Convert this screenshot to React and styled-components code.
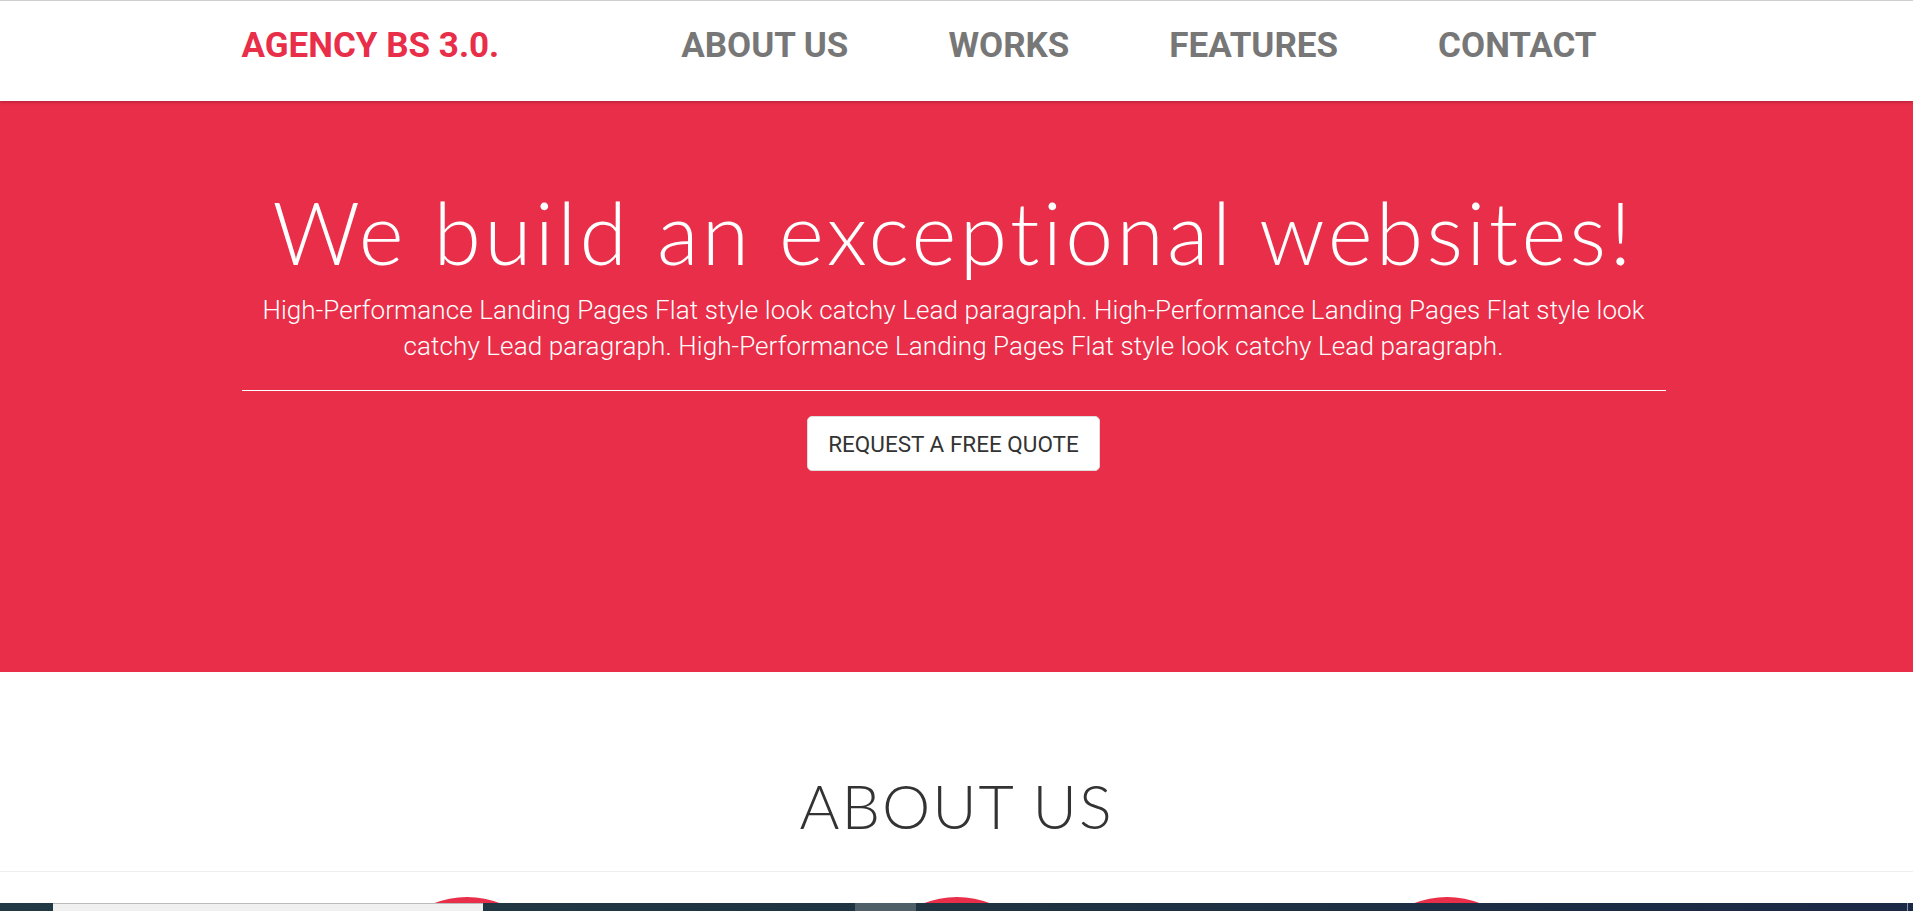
import React from "react"
import styled, { createGlobalStyle } from "styled-components"

const GlobalStyle = createGlobalStyle`
  html, body {
    margin: 0;
    padding: 0;
    background: #fff;
    font-family: Roboto, "Liberation Sans", sans-serif;
    overflow: hidden;
  }
  * {
    box-sizing: border-box;
  }
`

const Header = styled.header`
  position: relative;
  z-index: 2;
  height: 101px;
  background: #fff;
  border-top: 1px solid #cfcfcf;
  box-shadow: 0 1px 3px rgba(0, 0, 0, 0.25);
`

const Container = styled.div`
  width: 1424px;
  height: ${p => (p.$full ? "100%" : "auto")};
  margin-left: calc(50% - 715px);
`

const Nav = styled.nav`
  display: flex;
  align-items: center;
  justify-content: space-between;
  height: 100%;
  padding-right: 69px;
  padding-bottom: 12px;
`

const Brand = styled.a`
  font-size: 35px;
  font-weight: 700;
  color: #e82e48;
  text-decoration: none;
`

const NavItems = styled.ul`
  display: flex;
  gap: 100px;
  list-style-type: none;
  margin: 0;
  padding: 0;
`

const NavLink = styled.a`
  font-size: 35px;
  font-weight: 700;
  color: #777;
  text-decoration: none;
`

const Hero = styled.section`
  background: #e82e48;
  height: 571px;
  padding-top: 88px;
  color: #fff;
  text-align: center;
`

const Title = styled.h1`
  margin: 0;
  font-family: Lato, sans-serif;
  font-weight: 300;
  font-size: 86px;
  line-height: 1;
  letter-spacing: 3.3px;
`

const Lead = styled.p`
  margin: 17px 0 0;
  font-size: 26px;
  font-weight: 300;
  line-height: 36px;
  letter-spacing: 0.1px;
`

const Rule = styled.hr`
  border: 0;
  border-top: 1px solid #fff;
  margin: 26px 0 25px;
`

const QuoteButton = styled.a`
  display: inline-flex;
  align-items: center;
  justify-content: center;
  width: 293px;
  height: 55px;
  background: #fff;
  border: 1px solid #ddd;
  border-radius: 5px;
  color: #333;
  font-size: 22.5px;
  text-decoration: none;
`

const About = styled.section`
  padding-top: 103px;
  border-bottom: 1px solid #eee;
  height: 200px;
  text-align: center;
`

const SectionTitle = styled.h2`
  margin: 0;
  font-family: Lato, sans-serif;
  font-weight: 300;
  font-size: 61px;
  line-height: 1;
  color: #333;
  letter-spacing: 2px;
`

const Features = styled.div`
  display: grid;
  grid-template-columns: repeat(3, 1fr);
  width: 1470px;
  margin: 25px auto 0;
`

const Feature = styled.div`
  display: flex;
  justify-content: center;
`

const Circle = styled.div`
  width: 180px;
  height: 180px;
  border-radius: 50%;
  background: #e82e48;
`

const BottomBar = styled.div`
  position: fixed;
  left: 0;
  right: 0;
  bottom: 0;
  height: 8px;
  display: flex;
  background: linear-gradient(90deg, #213a44 0%, #1f3341 50%, #1b2846 100%);
  z-index: 5;
`

const BarPiece = styled.div`
  width: ${p => p.$w}px;
  margin-left: ${p => p.$ml || 0}px;
  background: ${p => p.$bg};
  border-top: ${p => (p.$border ? "1px solid #bbb" : "0")};
`

const BarTick = styled.div`
  margin-left: auto;
  margin-right: 5px;
  width: 1px;
  background: #8a96a6;
`

export default function App() {
  return (
    <>
      <GlobalStyle />
      <Header>
        <Container $full>
          <Nav role="navigation">
            <Brand href="#">AGENCY BS 3.0.</Brand>
            <NavItems>
              <li><NavLink href="#about">ABOUT US</NavLink></li>
              <li><NavLink href="#works">WORKS</NavLink></li>
              <li><NavLink href="#features">FEATURES</NavLink></li>
              <li><NavLink href="#contact">CONTACT</NavLink></li>
            </NavItems>
          </Nav>
        </Container>
      </Header>
      <Hero>
        <Container>
          <Title>We build an exceptional websites!</Title>
          <Lead>
            High-Performance Landing Pages Flat style look catchy Lead paragraph.
            High-Performance Landing Pages Flat style look catchy Lead paragraph.
            High-Performance Landing Pages Flat style look catchy Lead paragraph.
          </Lead>
          <Rule />
          <QuoteButton href="#">REQUEST A FREE QUOTE</QuoteButton>
        </Container>
      </Hero>
      <About id="about">
        <SectionTitle>ABOUT US</SectionTitle>
      </About>
      <Features>
        <Feature><Circle /></Feature>
        <Feature><Circle /></Feature>
        <Feature><Circle /></Feature>
      </Features>
      <BottomBar>
        <BarPiece $w={430} $ml={53} $bg="#f0f0f0" $border />
        <BarPiece $w={61} $ml={372} $bg="#4f5f67" />
        <BarTick />
      </BottomBar>
    </>
  )
}
